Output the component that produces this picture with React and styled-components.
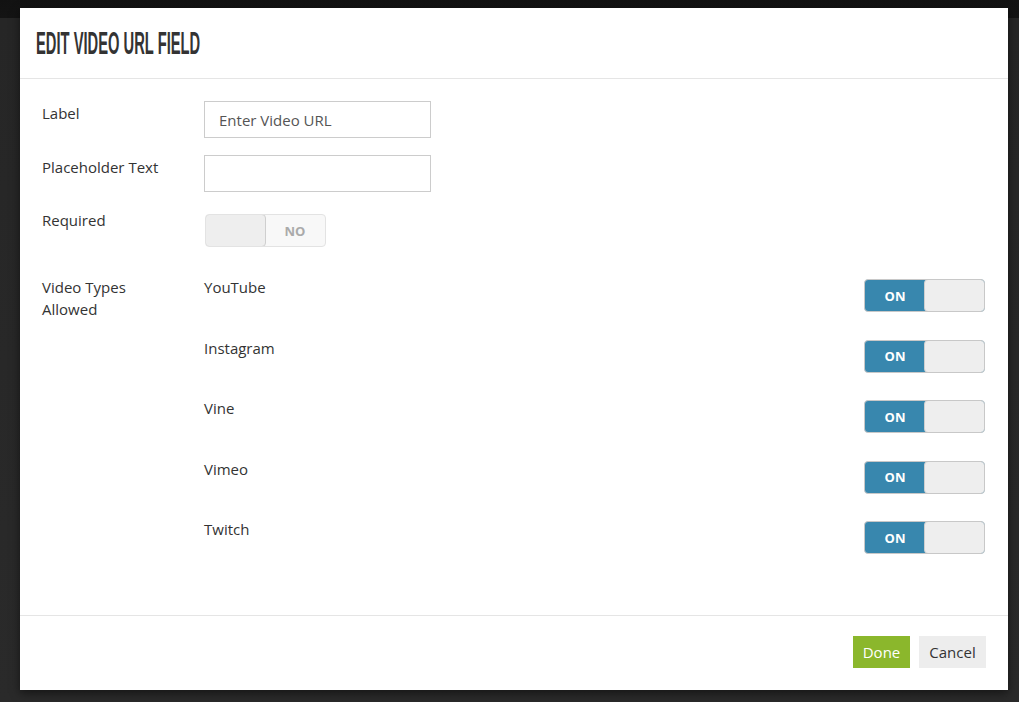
import React from 'react';
import styled, { createGlobalStyle } from 'styled-components';

const Global = createGlobalStyle`
  html, body {
    margin: 0;
    padding: 0;
  }
  body {
    font-family: "Open Sans", "Liberation Sans", sans-serif;
    color: #333;
  }
`;

const Backdrop = styled.div`
  width: 1019px;
  height: 702px;
  box-sizing: border-box;
  padding: 8px 11px 12px 20px;
  background: linear-gradient(#121212 0, #141414 18px, #262626 18px, #2a2a2a 100%);
`;

const Modal = styled.div`
  width: 988px;
  height: 682px;
  background: #fff;
  display: flex;
  flex-direction: column;
  box-shadow: 0 3px 9px rgba(0, 0, 0, 0.5);
`;

const Header = styled.div`
  height: 70px;
  flex-shrink: 0;
  display: flex;
  align-items: center;
  padding-left: 16px;
  border-bottom: 1px solid #e5e5e5;
`;

const Title = styled.h3`
  margin: 0;
  font-family: "Liberation Sans", Arial, sans-serif;
  font-weight: 700;
  font-size: 31px;
  line-height: 31px;
  text-transform: uppercase;
  color: #333;
  white-space: nowrap;
  transform: scaleX(0.475);
  transform-origin: left center;
`;

const Body = styled.div`
  flex: 1;
  padding: 22px 23px 0 22px;
`;

const Row = styled.div`
  display: grid;
  grid-template-columns: 162px 1fr;
  align-items: start;
  margin-bottom: ${p => p.$mb || 0}px;
`;

const Label = styled.div`
  font-size: 15px;
  line-height: 22px;
  color: #333;
  margin-top: ${p => p.$top || 0}px;
`;

const Input = styled.input`
  box-sizing: border-box;
  width: 227px;
  height: 37px;
  border: 1px solid #ccc;
  border-radius: 0;
  padding: 0 14px;
  font-family: "Open Sans", "Liberation Sans", sans-serif;
  font-size: 15px;
  color: #555;
  outline: none;
`;

const TypeList = styled.div`
  display: flex;
  flex-direction: column;
  gap: 27.5px;
`;

const TypeRow = styled.div`
  display: flex;
  justify-content: space-between;
  align-items: flex-start;
  height: 33px;
`;

const TypeName = styled.div`
  font-size: 15px;
  line-height: 22px;
  margin-top: -3px;
`;

const Switch = styled.div`
  box-sizing: border-box;
  width: 121px;
  height: 33px;
  display: flex;
  border: 1px solid ${p => (p.$on ? '#c8c8c8' : '#e3e3e3')};
  border-radius: 4px;
  overflow: hidden;
  background: ${p => (p.$on ? '#3887ae' : '#f8f8f8')};
  flex-direction: ${p => (p.$on ? 'row' : 'row-reverse')};
`;

const SwitchText = styled.span`
  width: 60px;
  display: flex;
  align-items: center;
  justify-content: center;
  font-family: "Open Sans", "Liberation Sans", sans-serif;
  font-weight: 700;
  font-size: 13px;
  color: ${p => (p.$on ? '#fff' : '#aaa')};
`;

const Knob = styled.span`
  flex: 1;
  background: #eee;
  border-radius: 4px;
  border: 1px solid #cfcfcf;
  margin: -1px;
`;

const Footer = styled.div`
  height: 75px;
  flex-shrink: 0;
  border-top: 1px solid #e5e5e5;
  display: flex;
  justify-content: flex-end;
  align-items: flex-start;
  gap: 9px;
  padding: 20px 22px 0 0;
  box-sizing: border-box;
`;

const Button = styled.button`
  width: ${p => p.$w}px;
  height: 32px;
  padding: 0;
  border: 0;
  border-radius: 0;
  font-family: "Open Sans", "Liberation Sans", sans-serif;
  font-size: 15px;
  background: ${p => (p.$primary ? '#8bb72c' : '#ededed')};
  color: ${p => (p.$primary ? '#fff' : '#333')};
  cursor: pointer;
`;

const Toggle = ({ on }) => (
  <Switch $on={on}>
    <SwitchText $on={on}>{on ? 'ON' : 'NO'}</SwitchText>
    <Knob />
  </Switch>
);

const types = ['YouTube', 'Instagram', 'Vine', 'Vimeo', 'Twitch'];

export default function App() {
  return (
    <>
      <Global />
      <Backdrop>
        <Modal>
          <Header>
            <Title>Edit Video URL Field</Title>
          </Header>
          <Body>
            <Row $mb={17}>
              <Label $top={1}>Label</Label>
              <Input defaultValue="Enter Video URL" />
            </Row>
            <Row $mb={22}>
              <Label $top={1}>Placeholder Text</Label>
              <Input defaultValue="" />
            </Row>
            <Row $mb={32}>
              <Label $top={-5}>Required</Label>
              <div style={{ paddingLeft: 1 }}>
                <Toggle on={false} />
              </div>
            </Row>
            <Row>
              <Label $top={-3}>Video Types<br />Allowed</Label>
              <TypeList>
                {types.map(t => (
                  <TypeRow key={t}>
                    <TypeName>{t}</TypeName>
                    <Toggle on />
                  </TypeRow>
                ))}
              </TypeList>
            </Row>
          </Body>
          <Footer>
            <Button $primary $w={57}>Done</Button>
            <Button $w={67}>Cancel</Button>
          </Footer>
        </Modal>
      </Backdrop>
    </>
  );
}
